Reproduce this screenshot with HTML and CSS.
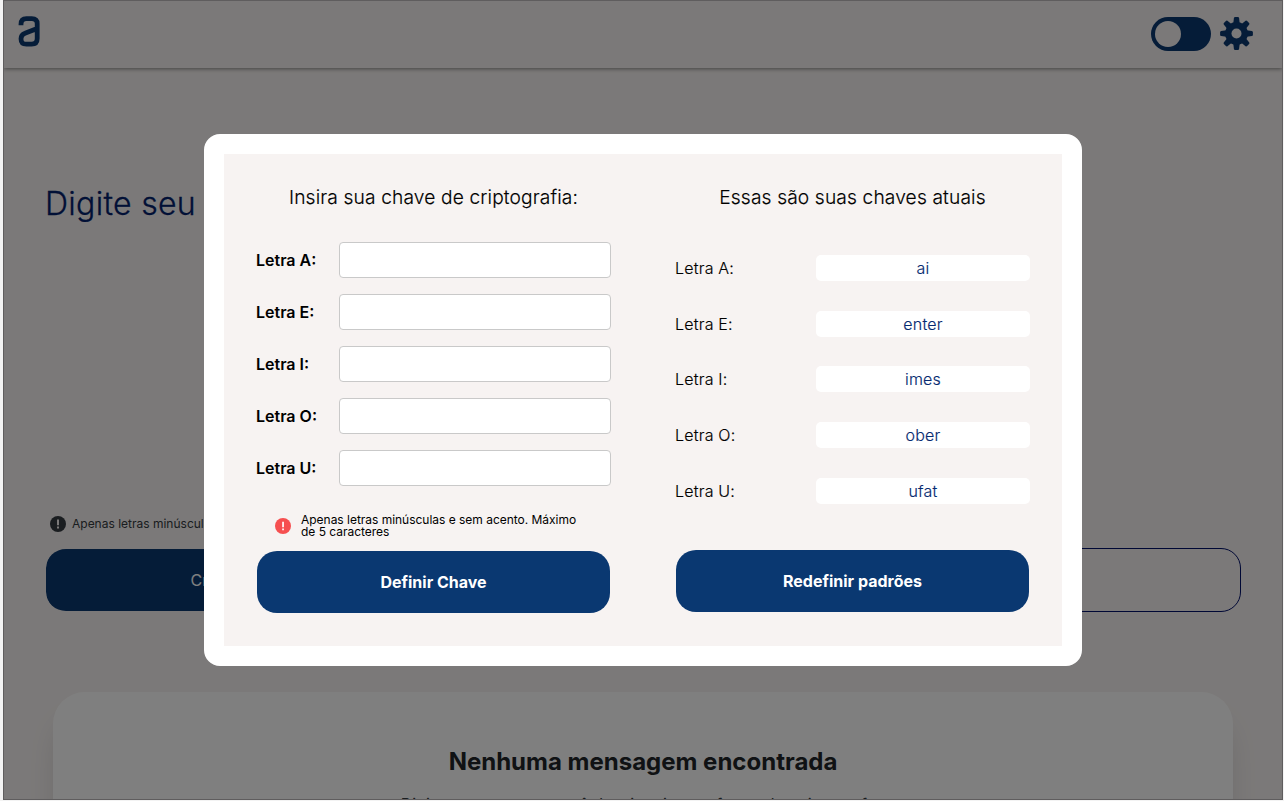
FILE: index.html
```html
<!DOCTYPE html>
<html lang="pt-BR">
<head>
<meta charset="utf-8">
<title>Criptografia</title>
<link rel="stylesheet" href="styles.css">
</head>
<body>
<div class="app">
  <header class="header">
    <svg class="logo" viewBox="0 0 22 31" fill="none" stroke="#0a3871" stroke-width="4.8"><path d="M3 9.2V8.2Q3 2.6 8.4 2.6h5.4q5.4 0 5.4 5.2V22.6q0 5.6-5.6 5.6H8.4Q3 28.2 3 22.8 3 18.6 7 17.2L19.2 12.4"/></svg>
    <div class="tools">
      <span class="switch"><span class="knob"></span></span>
      <svg class="gear" viewBox="-16.5 -16.5 33 33"><g fill="#0a3871"><g id="teeth"><path d="M-3.2-10 -2.6-15.4Q-2.4-16.4-1.4-16.4H1.4Q2.4-16.4 2.6-15.4L3.2-10V10L2.6 15.4Q2.4 16.4 1.4 16.4H-1.4Q-2.4 16.4-2.6 15.4L-3.2 10z"/><path transform="rotate(90)" d="M-3.2-10 -2.6-15.4Q-2.4-16.4-1.4-16.4H1.4Q2.4-16.4 2.6-15.4L3.2-10V10L2.6 15.4Q2.4 16.4 1.4 16.4H-1.4Q-2.4 16.4-2.6 15.4L-3.2 10z"/></g><use href="#teeth" transform="rotate(45)"/><circle r="11.4"/></g><circle r="5" fill="#f7f3f2"/></svg>
    </div>
  </header>
  <main class="main">
    <p class="prompt">Digite seu texto</p>
    <div class="hint">
      <svg viewBox="0 0 16 16"><circle cx="8" cy="8" r="8" fill="#343a40"/><path d="M7 3.6h2v5.6H7zM7 10.5h2v2H7z" fill="#f7f3f2"/></svg>
      <span>Apenas letras minúsculas e sem acento.</span>
    </div>
    <div class="actions">
      <button class="action filled">Criptografar</button>
      <button class="action outlined">Descriptografar</button>
    </div>
    <section class="result">
      <h2>Nenhuma mensagem encontrada</h2>
      <p>Digite um texto que você deseja criptografar ou descriptografar.</p>
    </section>
  </main>
  <div class="overlay">
    <div class="modal">
      <section class="panel">
        <h3>Insira sua chave de criptografia:</h3>
        <form class="fields">
          <label>Letra A:<input type="text"></label>
          <label>Letra E:<input type="text"></label>
          <label>Letra I:<input type="text"></label>
          <label>Letra O:<input type="text"></label>
          <label>Letra U:<input type="text"></label>
        </form>
        <div class="warning">
          <svg viewBox="0 0 16 16"><circle cx="8" cy="8" r="8" fill="#f64f50"/><path d="M7.2 3.8h1.7v5.5H7.2zM7.2 10.6h1.7v1.7H7.2z" fill="#fff"/></svg>
          <p>Apenas letras minúsculas e sem acento. Máximo de 5 caracteres</p>
        </div>
        <button class="submit">Definir Chave</button>
      </section>
      <section class="panel">
        <h3>Essas são suas chaves atuais</h3>
        <dl class="keys">
          <div><dt>Letra A:</dt><dd>ai</dd></div>
          <div><dt>Letra E:</dt><dd>enter</dd></div>
          <div><dt>Letra I:</dt><dd>imes</dd></div>
          <div><dt>Letra O:</dt><dd>ober</dd></div>
          <div><dt>Letra U:</dt><dd>ufat</dd></div>
        </dl>
        <button class="submit">Redefinir padrões</button>
      </section>
    </div>
  </div>
</div>
</body>
</html>
```
FILE: styles.css
```css
* { box-sizing: border-box; margin: 0; padding: 0; }
body { background: #f3f3f3; font-family: Inter, sans-serif; font-size: 16px; color: #000; overflow: hidden; }
button { font: inherit; border: 0; }
.app { position: relative; width: 1280px; height: 800px; margin-left: 3px; overflow: hidden; background: #f7f3f2; border: 1px solid #5f5d5e; }
.header { display: flex; justify-content: space-between; align-items: flex-start; height: 67px; padding: 15px 29px 0 14px; box-shadow: 0 1px 4px rgba(0,0,0,.45); }
.logo { width: 22px; height: 31px; }
.tools { display: flex; gap: 9px; padding-top: 1px; }
.switch { width: 60px; height: 34px; padding: 4px; border-radius: 17px; background: #0a3871; }
.knob { display: block; width: 26px; height: 26px; border-radius: 50%; background: #f7f3f2; }
.gear { width: 33px; height: 33px; }
.main { padding: 114px 41px 0 42px; }
.prompt { height: 334px; margin-left: -1px; font-size: 32px; line-height: 44px; font-weight: 300; letter-spacing: .3px; color: #02206c; -webkit-text-stroke: .3px #02206c; }
.hint { display: flex; align-items: center; gap: 6px; height: 16px; padding-left: 4px; font-size: 12px; color: #343a40; }
.hint span { margin-top: -1px; }
.hint svg, .warning svg { flex: none; width: 16px; height: 16px; }
.actions { display: flex; gap: 24px; margin-top: 16px; }
.action { flex: 1; height: 64px; border-radius: 20px; color: #fff; }
.filled { flex: 0 0 381px; background: #0a3871; border: 1px solid transparent; border-width: 1px 0; background-clip: padding-box; }
.outlined { background: transparent; border: 1px solid #00106b; color: #0a3871; }
.result { height: 300px; margin: 80px 8px 0 7px; padding-top: 52px; border-radius: 32px; background: #fff; text-align: center; color: #343a40; box-shadow: 0 24px 32px -8px rgba(0,0,0,.16); }
.result h2 { font-size: 24px; line-height: 36px; color: #212529; }
.result p { margin-top: 12px; line-height: 24px; white-space: nowrap; }
.overlay { position: absolute; inset: 0; padding: 133px 0 0 200px; background: rgba(0,0,0,.5); }
.modal { display: flex; width: 878px; height: 532px; border: 20px solid #fff; border-radius: 16px; background: #f7f3f2; }
.panel { width: 419px; padding: 31px 33px 0; }
.panel h3 { height: 57px; font-size: 19.2px; line-height: 24px; font-weight: 300; letter-spacing: .13px; text-align: center; white-space: nowrap; -webkit-text-stroke: .15px #000; }
.fields { display: grid; gap: 16px; margin: 0 -1px; }
.fields label { display: flex; align-items: center; justify-content: space-between; font-weight: 600; }
.fields input { width: 272px; height: 36px; border: 1px solid #c9c9c9; border-radius: 4px; background: #fff; }
.warning { display: flex; gap: 10px; height: 25px; margin: 28px 0 12px 18px; font-size: 12px; line-height: 12px; letter-spacing: -.02px; }
.warning svg { margin-top: 4px; }
.warning p { width: 290px; }
.submit { width: 353px; height: 62px; border-radius: 20px; background: #0a3871; color: #fff; font-weight: 700; }
.keys { display: flex; flex-direction: column; justify-content: space-between; height: 248.8px; margin: 13px -1px 46.2px; }
.keys div { display: flex; align-items: center; justify-content: space-between; height: 26px; font-weight: 300; letter-spacing: .2px; -webkit-text-stroke: .15px; }
.keys dd { width: 214px; height: 26px; border-radius: 5px; background: #fff; color: #062a70; text-align: center; line-height: 26px; }
```
